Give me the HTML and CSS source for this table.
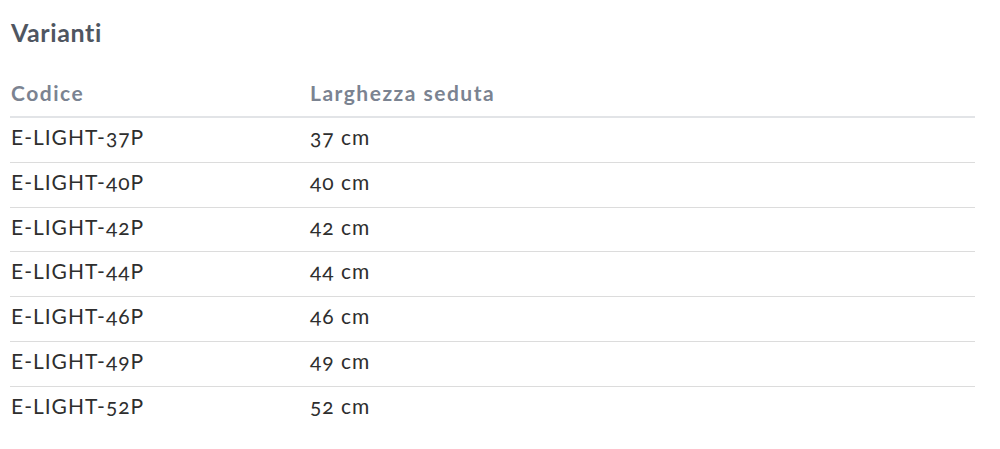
FILE: index.html
```html
<!DOCTYPE html>
<html lang="it">
<head>
<meta charset="utf-8">
<title>Varianti</title>
<link rel="stylesheet" href="styles.css">
</head>
<body>
<section class="variants">
  <h2 class="title">Varianti</h2>
  <table class="table">
    <thead>
      <tr><th class="col-code">Codice</th><th>Larghezza seduta</th></tr>
    </thead>
    <tbody>
      <tr><td>E-LIGHT-37P</td><td>37 cm</td></tr>
      <tr><td>E-LIGHT-40P</td><td>40 cm</td></tr>
      <tr><td>E-LIGHT-42P</td><td>42 cm</td></tr>
      <tr><td>E-LIGHT-44P</td><td>44 cm</td></tr>
      <tr><td>E-LIGHT-46P</td><td>46 cm</td></tr>
      <tr><td>E-LIGHT-49P</td><td>49 cm</td></tr>
      <tr><td>E-LIGHT-52P</td><td>52 cm</td></tr>
    </tbody>
  </table>
</section>
</body>
</html>
```
FILE: styles.css
```css
html, body {
  margin: 0;
  padding: 0;
  background: #ffffff;
}
body {
  font-family: Lato, "Open Sans", sans-serif;
  font-variant-numeric: oldstyle-nums;
  font-feature-settings: "onum" 1;
}
.variants {
  padding: 14px 25px 0 10px;
}
.title {
  margin: 0 0 29px 1px;
  font-size: 25px;
  font-weight: 700;
  letter-spacing: 0.6px;
  color: #4f5661;
  line-height: 36px;
}
.table {
  width: 100%;
  border-collapse: collapse;
}
.table th {
  text-align: left;
  font-size: 21px;
  font-weight: 700;
  letter-spacing: 1.5px;
  color: #7b8391;
  padding: 0 1px 9px;
  border-bottom: 2px solid #e2e4e7;
  line-height: 28px;
}
.col-code {
  width: 297px;
}
.table td {
  font-size: 21px;
  letter-spacing: 1px;
  color: #2e2e2e;
  padding: 5px 1px 11px;
  line-height: 27.8px;
  border-bottom: 1px solid #dcdcdc;
}
.table tbody tr:last-child td {
  border-bottom: none;
}
```
